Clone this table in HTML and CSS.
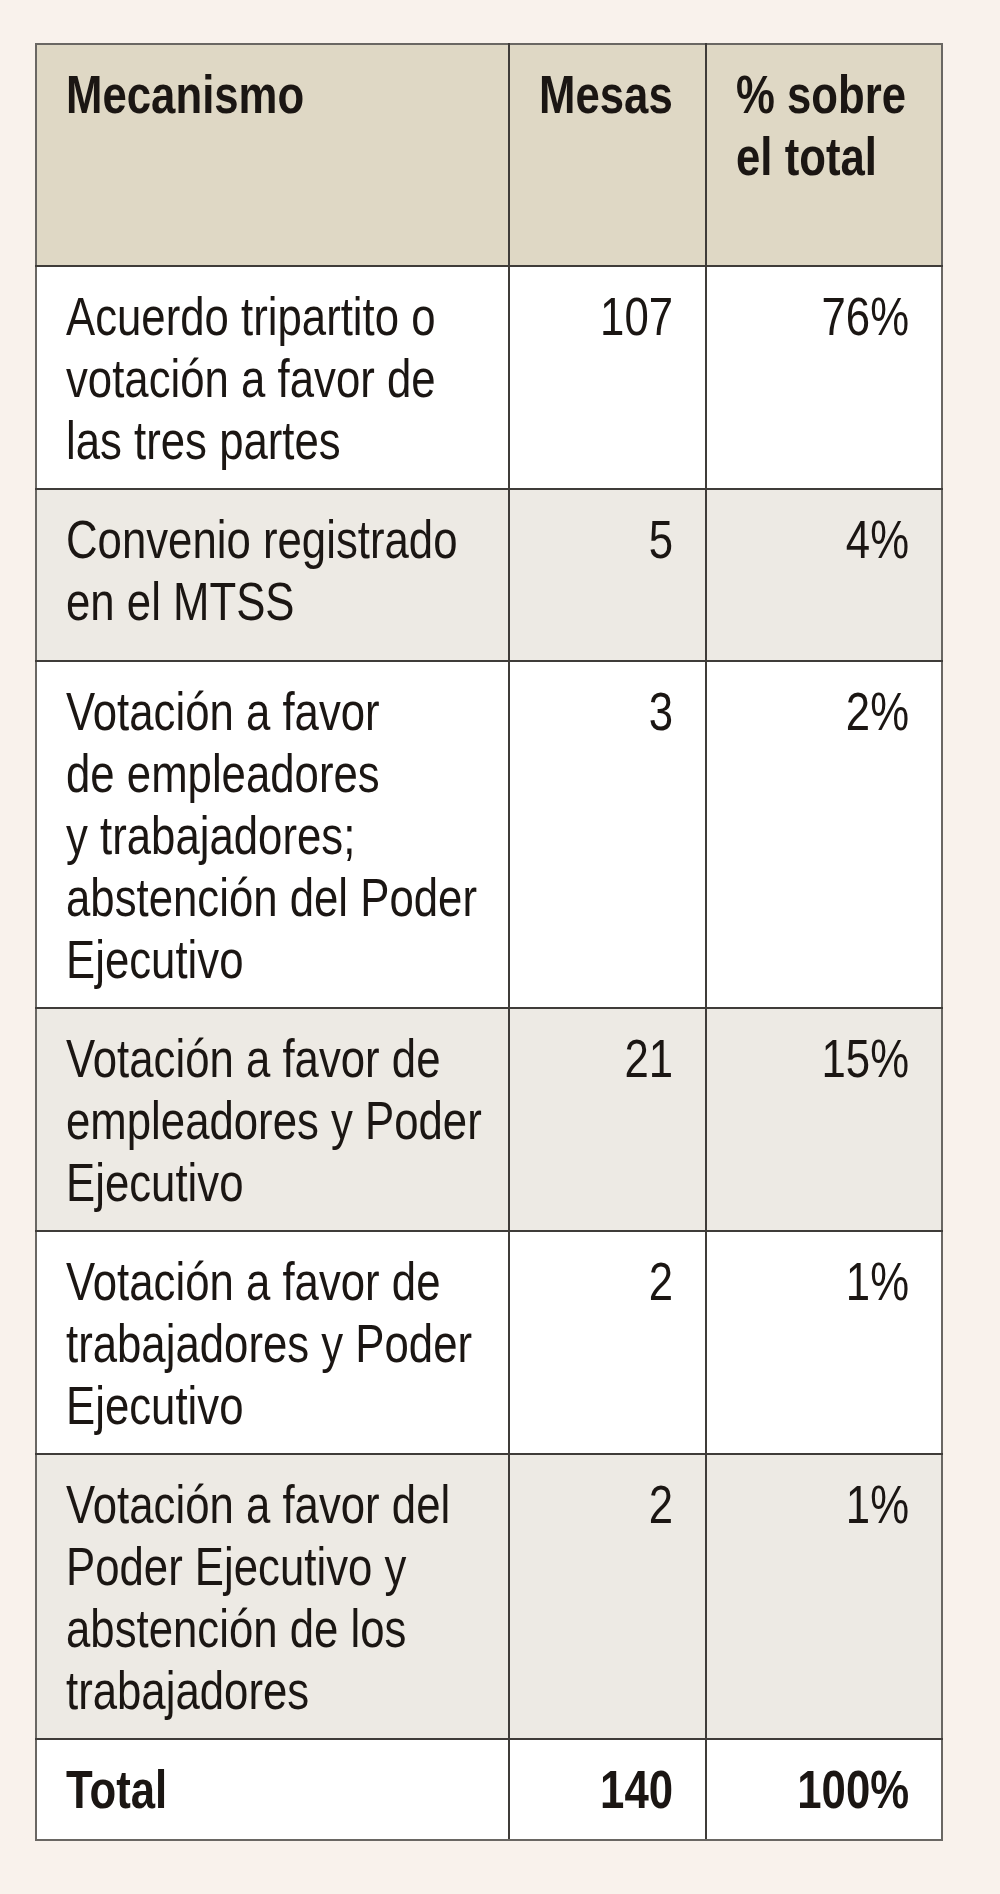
FILE: index.html
```html
<!DOCTYPE html>
<html lang="es">
<head>
<meta charset="utf-8">
<title>Mecanismo</title>
<link rel="stylesheet" href="styles.css">
</head>
<body>
<main class="page">
  <table class="mesas">
    <colgroup>
      <col class="c-mec">
      <col class="c-num">
      <col class="c-pct">
    </colgroup>
    <thead>
      <tr>
        <th><span class="t">Mecanismo</span></th>
        <th><span class="t">Mesas</span></th>
        <th><span class="t">% sobre<br>el total</span></th>
      </tr>
    </thead>
    <tbody>
      <tr class="light">
        <td><span class="t">Acuerdo tripartito o<br>votación a favor de<br>las tres partes</span></td>
        <td class="num"><span class="t">107</span></td>
        <td class="num"><span class="t">76%</span></td>
      </tr>
      <tr class="shade tall">
        <td><span class="t">Convenio registrado<br>en el MTSS</span></td>
        <td class="num"><span class="t">5</span></td>
        <td class="num"><span class="t">4%</span></td>
      </tr>
      <tr class="light">
        <td><span class="t">Votación a favor<br>de empleadores<br>y trabajadores;<br>abstención del Poder<br>Ejecutivo</span></td>
        <td class="num"><span class="t">3</span></td>
        <td class="num"><span class="t">2%</span></td>
      </tr>
      <tr class="shade">
        <td><span class="t">Votación a favor de<br>empleadores y Poder<br>Ejecutivo</span></td>
        <td class="num"><span class="t">21</span></td>
        <td class="num"><span class="t">15%</span></td>
      </tr>
      <tr class="light">
        <td><span class="t">Votación a favor de<br>trabajadores y Poder<br>Ejecutivo</span></td>
        <td class="num"><span class="t">2</span></td>
        <td class="num"><span class="t">1%</span></td>
      </tr>
      <tr class="shade">
        <td><span class="t">Votación a favor del<br>Poder Ejecutivo y<br>abstención de los<br>trabajadores</span></td>
        <td class="num"><span class="t">2</span></td>
        <td class="num"><span class="t">1%</span></td>
      </tr>
      <tr class="light total">
        <td><span class="t">Total</span></td>
        <td class="num"><span class="t">140</span></td>
        <td class="num"><span class="t">100%</span></td>
      </tr>
    </tbody>
  </table>
</main>
</body>
</html>
```
FILE: styles.css
```css
html, body {
  margin: 0;
  padding: 0;
  background: #f9f2ec;
}

.page {
  padding: 43px 0 40px 35px;
}

.mesas {
  border-collapse: collapse;
  table-layout: fixed;
  width: 906px;
  border: 2px solid #6a6763;
  font-family: "Liberation Sans", Arial, sans-serif;
  font-size: 54px;
  line-height: 62px;
  color: #1b1613;
}

.c-mec { width: 473px; }
.c-num { width: 197px; }
.c-pct { width: 236px; }

.mesas th,
.mesas td {
  border: 2px solid #3f3c39;
  padding: 18px 30px 17px 29px;
  vertical-align: top;
  text-align: left;
  overflow: visible;
}

.t {
  display: inline-block;
  white-space: nowrap;
  transform: scaleX(0.81);
  transform-origin: 0 0;
}

.mesas th {
  background: #dfd8c5;
  font-weight: bold;
  padding-bottom: 78px;
}

.mesas tr > :first-child { border-left-color: #6a6763; }
.mesas tr > :last-child { border-right-color: #6a6763; }
.mesas thead th { border-top-color: #6a6763; }
.mesas .total td { border-bottom-color: #6a6763; padding-bottom: 19px; }

.light td { background: #ffffff; }
.shade td { background: #edeae4; }
.tall td { padding-bottom: 28px; }

.mesas td.num {
  text-align: right;
  padding-right: 32px;
}

.num .t {
  transform-origin: 100% 0;
}

.total td {
  font-weight: bold;
}
```
